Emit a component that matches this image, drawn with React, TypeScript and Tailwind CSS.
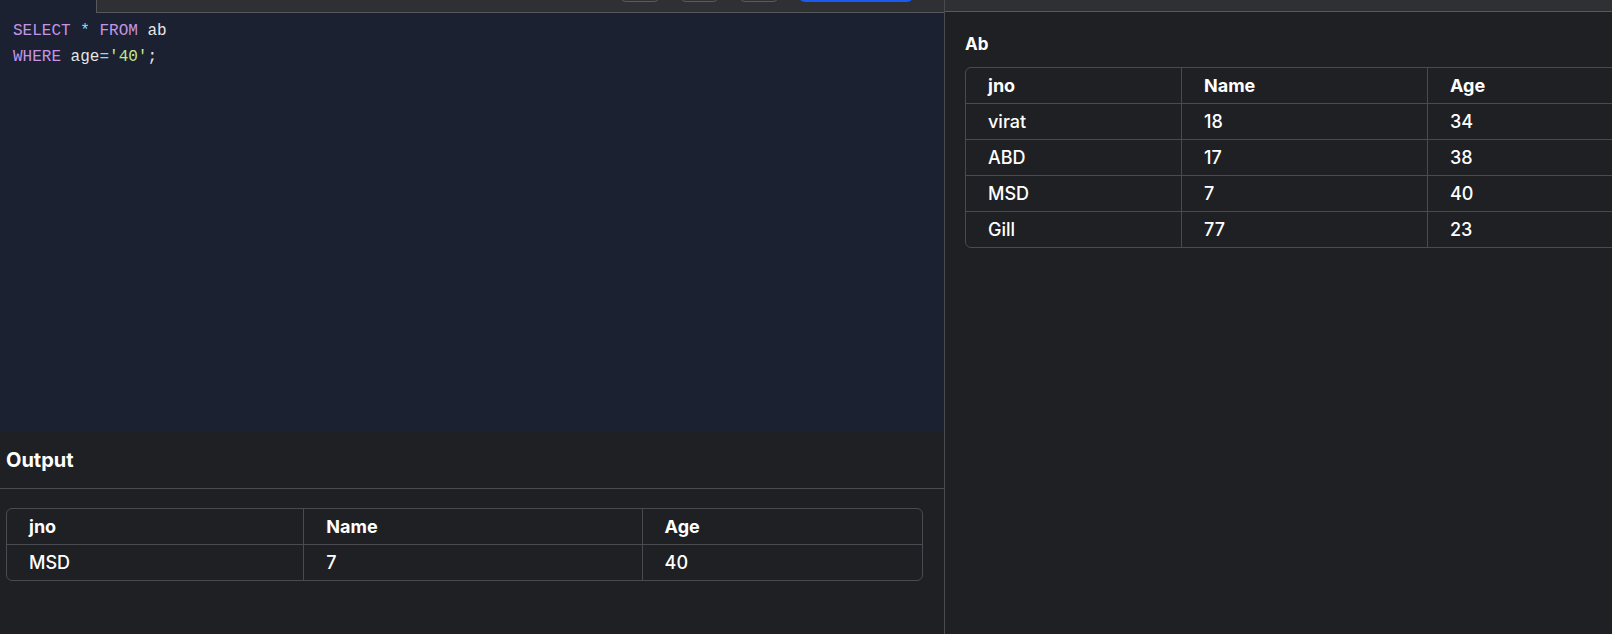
const ui = { fontFamily: "Inter, 'Noto Sans', sans-serif" }
const mono = { fontFamily: "'Liberation Mono', 'DejaVu Sans Mono', monospace" }

type Row = [string, string, string]

function DataTable({ rows, widths, className }: { rows: Row[]; widths: number[]; className: string }) {
  const head: Row = ["jno", "Name", "Age"]
  return (
    <table className={"border-separate border-spacing-0 rounded-md border border-[#4a4b50] text-[18px] text-white " + className}>
      <colgroup>
        {widths.map((w, i) => (
          <col key={i} style={{ width: w }} />
        ))}
      </colgroup>
      <thead>
        <tr>
          {head.map((h, i) => (
            <th
              key={h}
              className={
                "h-[35px] pl-[22px] text-left font-bold " + (i > 0 ? "border-l border-[#4a4b50]" : "")
              }
            >
              {h}
            </th>
          ))}
        </tr>
      </thead>
      <tbody>
        {rows.map((r) => (
          <tr key={r[0]}>
            {r.map((c, i) => (
              <td
                key={i}
                className={
                  "h-[36px] border-t border-[#4a4b50] pl-[22px] font-medium " +
                  (i > 0 ? "border-l" : "")
                }
              >
                {c}
              </td>
            ))}
          </tr>
        ))}
      </tbody>
    </table>
  )
}

export default function App() {
  const all: Row[] = [
    ["virat", "18", "34"],
    ["ABD", "17", "38"],
    ["MSD", "7", "40"],
    ["Gill", "77", "23"],
  ]
  return (
    <div className="flex h-[634px] w-[1612px] overflow-hidden bg-[#1f2023]" style={ui}>
      <div className="flex w-[944px] shrink-0 flex-col">
        <div className="relative h-[432px] shrink-0 bg-[#1b2130]">
          <div className="absolute left-[96px] right-0 top-0 flex h-[13px] items-end justify-end gap-5 overflow-hidden border-b border-l border-[#58595e] bg-[#2f3034] pr-[31px]">
            <div className="mb-[10px] h-[30px] w-[40px] rounded-md border border-[#5a5b60]" />
            <div className="mb-[10px] h-[30px] w-[39px] rounded-md border border-[#5a5b60]" />
            <div className="mb-[10px] h-[30px] w-[40px] rounded-md border border-[#5a5b60]" />
            <div className="mb-[10px] h-[30px] w-[114px] rounded-md bg-[#1a5cf2]" />
          </div>
          <pre className="pl-[13px] pt-[19px] text-[16px] leading-[25.5px] text-[#e6e6e6]" style={mono}>
            <span className="text-[#c594e8]">SELECT</span> <span className="text-[#89ddff]">*</span>{" "}
            <span className="text-[#c594e8]">FROM</span> ab{"\n"}
            <span className="text-[#c594e8]">WHERE</span> age<span className="text-[#89ddff]">=</span>
            <span className="text-[#c3e88d]">'40'</span>;
          </pre>
        </div>
        <div className="flex h-[57px] shrink-0 items-center border-b border-[#4a4b50] px-[6px]">
          <h2 className="text-[20px] font-bold text-white">Output</h2>
        </div>
        <div className="px-[6px] pt-[19px]">
          <DataTable rows={[["MSD", "7", "40"]]} widths={[297, 339, 281]} className="w-[917px]" />
        </div>
      </div>
      <div className="w-px shrink-0 bg-[#4a4b50]" />
      <div className="flex min-w-0 flex-1 flex-col overflow-hidden">
        <div className="h-[12px] shrink-0 border-b border-[#58595e] bg-[#2f3034]" />
        <h3 className="pl-[20px] pt-[20px] text-[17px] font-bold leading-[24px] text-white">Ab</h3>
        <div className="pl-[20px] pt-[11px]">
          <DataTable rows={all} widths={[215, 246, 280]} className="w-[741px] table-fixed" />
        </div>
      </div>
    </div>
  )
}
